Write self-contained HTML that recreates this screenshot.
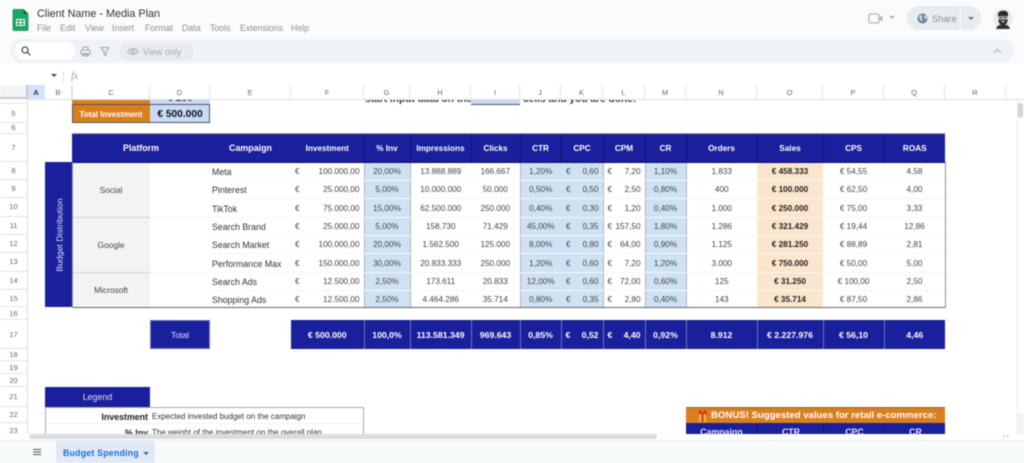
<!DOCTYPE html>
<html lang="en">
<head>
<meta charset="utf-8">
<title>Client Name - Media Plan</title>
<style>
html,body{margin:0;padding:0;width:1024px;height:463px;overflow:hidden;background:#fff}
body{position:relative;font-family:"Liberation Sans",sans-serif;color:#222}
#root{position:absolute;left:0;top:0;width:1024px;height:463px;overflow:hidden;filter:blur(.4px)}
.a{position:absolute;white-space:nowrap}
.c{text-align:center}
.chrome{left:0;top:0;width:1024px;height:64px;background:#f9fbfd}
.menu{top:23px;font-size:8.8px;color:#8b8f94}
.ch{top:85px;height:14px;line-height:15px;font-size:7.5px;color:#666;text-align:center;border-right:1px solid #e1e3e6;box-sizing:border-box;background:#fff}
.rh{left:0;width:28px;font-size:7.5px;color:#666;text-align:center;border-bottom:1px solid #e1e3e6;border-right:1px solid #dcdee1;box-sizing:border-box;background:#fff}
table{border-collapse:collapse;table-layout:fixed;position:absolute;font-size:8.2px;line-height:10px;color:#444}
td{padding:2px 0 0;box-sizing:border-box;overflow:hidden;white-space:nowrap;text-align:center;vertical-align:middle;border-bottom:1px solid #f7f7f7}
#data .hd td{background:#1a1f9c;color:#fff;font-weight:bold;font-size:8.2px;padding-top:3px;border-left:1px solid #11146e;border-bottom:1px solid #11146e}
#data .hd td.ar{font-size:8.9px;padding-top:1px;border-left:0}
td.b{background:#cfe2f3}
td.s{background:#fce5cd;font-weight:bold;color:#222}
td.l{border-left:1px solid #b0b4ba}
td.cam{text-align:left;padding-left:2px;font-size:8.8px;color:#333}
td.p{background:#f3f3f3;font-size:8.4px;color:#444;border-bottom:1px solid #d5d5d5;padding-top:0}
td.m{text-align:right;padding-right:4px}
td.m span{float:left;padding-left:4px}
td.ma span{padding-left:5px}
#tot td{background:#1a1f9c;color:#fff;font-weight:bold;font-size:8.7px;height:29px;padding-top:1px;border:0;border-left:1px solid #6d70bd}
#tot td:first-child{border-left:0}
#tot td.m span{padding-left:4px}
</style>
</head>
<body>
<div id="root">

<!-- sheet content -->
<div class="a" style="left:0;top:0;width:1024px;height:434px;overflow:hidden;background:#fff">
  <!-- row 4 remnants + row 5 -->
  <div class="a" style="left:72px;top:95px;width:78px;height:9px;background:#d97f1e"></div>
  <div class="a c" style="left:150px;top:93px;width:60px;height:11px;background:#c9daf8;font-size:10.2px;font-weight:bold;line-height:11px">€ 250</div>
  <div class="a c" style="left:72px;top:105px;width:78px;height:18px;line-height:19px;background:#d97f1e;color:#fff;font-size:8px;font-weight:bold">Total Investment</div>
  <div class="a c" style="left:150px;top:105px;width:60px;height:18px;line-height:19px;background:#c9daf8;color:#111;font-size:10.2px;font-weight:bold">€ 500.000</div>
  <div class="a" style="left:72px;top:104px;width:138px;height:19px;border:1px solid #555;box-sizing:border-box"></div>
  <div class="a" style="left:365px;top:94px;font-size:10.2px;font-weight:bold;color:#333;line-height:12px">start input data on the</div>
  <div class="a" style="left:471px;top:92px;width:49px;height:12px;background:#c9daf8;border-bottom:1px solid #555"></div>
  <div class="a" style="left:523px;top:94px;font-size:10.2px;font-weight:bold;color:#333;line-height:12px">cells and you are done!</div>

  <!-- side bar -->
  <div class="a" style="left:45px;top:162px;width:27px;height:145px;background:#1a1f9c"></div>
  <div class="a c" style="left:-13px;top:228px;width:145px;height:14px;line-height:14px;font-size:8.7px;color:#dfe0f5;transform:rotate(-90deg)">Budget Distribution</div>

  <table id="data" style="left:72px;top:134px;width:873px">
    <colgroup><col style="width:78px"><col style="width:60px"><col style="width:81px"><col style="width:73px"><col style="width:46px"><col style="width:61px"><col style="width:49px"><col style="width:41px"><col style="width:42px"><col style="width:42px"><col style="width:41px"><col style="width:71px"><col style="width:66px"><col style="width:61px"><col style="width:61px"></colgroup>
    <tr class="hd" style="height:28px"><td class="ar" colspan="2">Platform</td><td class="ar">Campaign</td><td style="border-left:0">Investment</td><td>% Inv</td><td>Impressions</td><td>Clicks</td><td>CTR</td><td>CPC</td><td>CPM</td><td>CR</td><td>Orders</td><td>Sales</td><td>CPS</td><td>ROAS</td></tr>
    <tr style="height:18px"><td class="p" rowspan="3">Social</td><td rowspan="3"></td><td class="cam">Meta</td><td class="m"><span>€</span>100.000,00</td><td class="b l">20,00%</td><td class="l">13.888.889</td><td>166.667</td><td class="b l">1,20%</td><td class="b m ma"><span>€</span>0,60</td><td class="m l"><span>€</span>7,20</td><td class="b l">1,10%</td><td class="l">1.833</td><td class="s">€ 458.333</td><td>€ 54,55</td><td>4,58</td></tr>
    <tr style="height:18px"><td class="cam">Pinterest</td><td class="m"><span>€</span>25.000,00</td><td class="b l">5,00%</td><td class="l">10.000.000</td><td>50.000</td><td class="b l">0,50%</td><td class="b m ma"><span>€</span>0,50</td><td class="m l"><span>€</span>2,50</td><td class="b l">0,80%</td><td class="l">400</td><td class="s">€ 100.000</td><td>€ 62,50</td><td>4,00</td></tr>
    <tr style="height:19px"><td class="cam">TikTok</td><td class="m"><span>€</span>75.000,00</td><td class="b l">15,00%</td><td class="l">62.500.000</td><td>250.000</td><td class="b l">0,40%</td><td class="b m ma"><span>€</span>0,30</td><td class="m l"><span>€</span>1,20</td><td class="b l">0,40%</td><td class="l">1.000</td><td class="s">€ 250.000</td><td>€ 75,00</td><td>3,33</td></tr>
    <tr style="height:18px"><td class="p" rowspan="3">Google</td><td rowspan="3"></td><td class="cam">Search Brand</td><td class="m"><span>€</span>25.000,00</td><td class="b l">5,00%</td><td class="l">158.730</td><td>71.429</td><td class="b l">45,00%</td><td class="b m ma"><span>€</span>0,35</td><td class="m l"><span>€</span>157,50</td><td class="b l">1,80%</td><td class="l">1.286</td><td class="s">€ 321.429</td><td>€ 19,44</td><td>12,86</td></tr>
    <tr style="height:18px"><td class="cam">Search Market</td><td class="m"><span>€</span>100.000,00</td><td class="b l">20,00%</td><td class="l">1.562.500</td><td>125.000</td><td class="b l">8,00%</td><td class="b m ma"><span>€</span>0,80</td><td class="m l"><span>€</span>64,00</td><td class="b l">0,90%</td><td class="l">1.125</td><td class="s">€ 281.250</td><td>€ 88,89</td><td>2,81</td></tr>
    <tr style="height:19px"><td class="cam">Performance Max</td><td class="m"><span>€</span>150.000,00</td><td class="b l">30,00%</td><td class="l">20.833.333</td><td>250.000</td><td class="b l">1,20%</td><td class="b m ma"><span>€</span>0,60</td><td class="m l"><span>€</span>7,20</td><td class="b l">1,20%</td><td class="l">3.000</td><td class="s">€ 750.000</td><td>€ 50,00</td><td>5,00</td></tr>
    <tr style="height:18px"><td class="p" rowspan="2" style="border-bottom:0;font-size:8.3px">Microsoft</td><td rowspan="2"></td><td class="cam">Search Ads</td><td class="m"><span>€</span>12.500,00</td><td class="b l">2,50%</td><td class="l">173.611</td><td>20.833</td><td class="b l">12,00%</td><td class="b m ma"><span>€</span>0,60</td><td class="m l"><span>€</span>72,00</td><td class="b l">0,60%</td><td class="l">125</td><td class="s">€ 31.250</td><td>€ 100,00</td><td>2,50</td></tr>
    <tr style="height:17px"><td class="cam">Shopping Ads</td><td class="m"><span>€</span>12.500,00</td><td class="b l">2,50%</td><td class="l">4.464.286</td><td>35.714</td><td class="b l">0,80%</td><td class="b m ma"><span>€</span>0,35</td><td class="m l"><span>€</span>2,80</td><td class="b l">0,40%</td><td class="l">143</td><td class="s">€ 35.714</td><td>€ 87,50</td><td>2,86</td></tr>
  </table>
  <!-- table outline -->
  <div class="a" style="left:72px;top:133px;width:873px;height:1px;background:#aaa"></div>
  <div class="a" style="left:72px;top:307px;width:873px;height:1px;background:#666"></div>
  <div class="a" style="left:945px;top:162px;width:1px;height:146px;background:#8f8f8f"></div>
  <div class="a" style="left:72px;top:162px;width:1px;height:146px;background:#9a9a9a"></div>

  <!-- totals -->
  <div class="a c" style="left:150px;top:320px;width:60px;height:29px;line-height:29px;background:#1a1f9c;color:#e3e4f7;font-size:8.6px;border:1px solid #6d70bd;box-sizing:border-box">Total</div>
  <table id="tot" style="left:291px;top:320px;width:654px">
    <colgroup><col style="width:73px"><col style="width:46px"><col style="width:61px"><col style="width:49px"><col style="width:41px"><col style="width:42px"><col style="width:42px"><col style="width:41px"><col style="width:71px"><col style="width:66px"><col style="width:61px"><col style="width:61px"></colgroup>
    <tr><td>€ 500.000</td><td>100,0%</td><td>113.581.349</td><td>969.643</td><td>0,85%</td><td class="m"><span>€</span>0,52</td><td class="m"><span>€</span>4,40</td><td>0,92%</td><td>8.912</td><td>€ 2.227.976</td><td>€ 56,10</td><td>4,46</td></tr>
  </table>

  <!-- legend -->
  <div class="a c" style="left:45px;top:387px;width:105px;height:20px;line-height:21px;background:#1a1f9c;color:#dcdef5;font-size:8.9px">Legend</div>
  <div class="a" style="left:45px;top:407px;width:319px;height:42px;border:1px solid #aaa;box-sizing:border-box"></div>
  <div class="a" style="left:46px;top:423px;width:317px;height:1px;background:#efefef"></div>
  <div class="a" style="left:46px;top:410px;width:102px;text-align:right;font-size:8.8px;font-weight:bold;color:#222;line-height:14px">Investment</div>
  <div class="a" style="left:152px;top:410px;font-size:8px;color:#333;line-height:14px">Expected invested budget on the campaign</div>
  <div class="a" style="left:46px;top:426px;width:102px;text-align:right;font-size:8.8px;font-weight:bold;color:#222;line-height:14px">% Inv</div>
  <div class="a" style="left:152px;top:426px;font-size:8px;color:#333;line-height:14px">The weight of the investment on the overall plan</div>

  <!-- bonus -->
  <div class="a" style="left:686px;top:407px;width:259px;height:16px;line-height:18px;background:#d97f1e;color:#fff;font-size:9.6px;font-weight:bold;box-shadow:inset 0 1px 0 #8a6a3a;text-indent:25px">BONUS! Suggested values for retail e-commerce:</div>
  <svg class="a" style="left:697px;top:410px" width="11" height="12" viewBox="0 0 11 12"><rect x="1" y="2" width="9" height="2" fill="#d8342a"/><rect x="2" y="4" width="7" height="8" fill="#e8b339"/><rect x="4.500" y="2" width="2" height="10" fill="#d8342a"/><rect x="2" y="0" width="2" height="2" fill="#d8342a"/><rect x="7" y="0" width="2" height="2" fill="#d8342a"/></svg>
  <div class="a" style="left:686px;top:423px;width:259px;height:12px;background:#1a1f9c"></div>
  <div class="a c" style="left:686px;top:425px;width:71px;font-size:8.8px;font-weight:bold;color:#e3e4f7;line-height:14px">Campaign</div>
  <div class="a c" style="left:757px;top:425px;width:66px;font-size:8.8px;font-weight:bold;color:#e3e4f7;line-height:14px;border-left:1px solid #11146e">CTR</div>
  <div class="a c" style="left:823px;top:425px;width:61px;font-size:8.8px;font-weight:bold;color:#e3e4f7;line-height:14px;border-left:1px solid #11146e">CPC</div>
  <div class="a c" style="left:884px;top:425px;width:61px;font-size:8.8px;font-weight:bold;color:#e3e4f7;line-height:14px;border-left:1px solid #11146e">CR</div>

  <!-- right scroll gutter -->
  <div class="a" style="left:1017px;top:99px;width:1px;height:341px;background:#e8eaed"></div>
  <div class="a" style="left:1018px;top:103px;width:5px;height:15px;border-radius:3px;background:#d2d4d8"></div>
  <div class="a" style="left:1018px;top:414px;width:6px;height:20px;background:#f3f3f3"></div>
</div>

<!-- column headers -->
<div class="a" style="left:0;top:85px;width:1024px;height:14px;background:#fff;border-bottom:1px solid #dfe1e4;box-sizing:content-box"></div>
<div class="a" style="left:0;top:85px;width:28px;height:14px;background:#f4f5f6;border-right:2px solid #c4c6c9;border-bottom:2px solid #c4c6c9;box-sizing:border-box"></div>
<div class="a ch" style="left:28px;width:17px;background:#d3e3fd;color:#333;font-weight:bold">A</div>
<div class="a ch" style="left:45px;width:27px">B</div>
<div class="a ch" style="left:72px;width:78px;border-left:1px solid #e1e3e6">C</div>
<div class="a ch" style="left:150px;width:60px">D</div>
<div class="a ch" style="left:210px;width:81px">E</div>
<div class="a ch" style="left:291px;width:73px">F</div>
<div class="a ch" style="left:364px;width:46px">G</div>
<div class="a ch" style="left:410px;width:61px">H</div>
<div class="a ch" style="left:471px;width:49px">I</div>
<div class="a ch" style="left:520px;width:41px">J</div>
<div class="a ch" style="left:561px;width:42px">K</div>
<div class="a ch" style="left:603px;width:42px">L</div>
<div class="a ch" style="left:645px;width:41px">M</div>
<div class="a ch" style="left:686px;width:71px">N</div>
<div class="a ch" style="left:757px;width:66px">O</div>
<div class="a ch" style="left:823px;width:61px">P</div>
<div class="a ch" style="left:884px;width:61px">Q</div>
<div class="a ch" style="left:945px;width:61px">R</div>

<!-- row headers -->
<div class="a" style="left:0;top:99px;width:28px;height:335px;overflow:hidden">
  <div class="a rh" style="top:0;height:5px"></div>
  <div class="a rh" style="top:5px;height:19px;line-height:19px">5</div>
  <div class="a rh" style="top:24px;height:11px;line-height:9px">6</div>
  <div class="a rh" style="top:35px;height:28px;line-height:28px">7</div>
  <div class="a rh" style="top:63px;height:18px;line-height:18px">8</div>
  <div class="a rh" style="top:81px;height:18px;line-height:18px">9</div>
  <div class="a rh" style="top:99px;height:19px;line-height:18px">10</div>
  <div class="a rh" style="top:118px;height:18px;line-height:18px">11</div>
  <div class="a rh" style="top:136px;height:18px;line-height:18px">12</div>
  <div class="a rh" style="top:154px;height:19px;line-height:18px">13</div>
  <div class="a rh" style="top:173px;height:18px;line-height:18px">14</div>
  <div class="a rh" style="top:191px;height:17px;line-height:18px">15</div>
  <div class="a rh" style="top:208px;height:13px;line-height:13px">16</div>
  <div class="a rh" style="top:221px;height:29px;line-height:29px">17</div>
  <div class="a rh" style="top:250px;height:12px;line-height:12px">18</div>
  <div class="a rh" style="top:262px;height:13px;line-height:13px">19</div>
  <div class="a rh" style="top:275px;height:13px;line-height:13px">20</div>
  <div class="a rh" style="top:288px;height:20px;line-height:20px">21</div>
  <div class="a rh" style="top:308px;height:16px;line-height:16px">22</div>
  <div class="a rh" style="top:324px;height:16px;line-height:16px">23</div>
</div>

<!-- top chrome -->
<div class="a chrome"></div>
<svg class="a" style="left:12px;top:9px" width="17" height="22" viewBox="0 0 17 22"><path d="M2 0h9.500L16.500 5v15.500a1.500 1.500 0 0 1-1.500 1.500H2a1.500 1.500 0 0 1-1.500-1.500V1.500A1.500 1.500 0 0 1 2 0z" fill="#1fa463"/><path d="M11.500 0l5 5h-5z" fill="#0d6b3d"/><path d="M4 10h9v7H4z M5 11v2h3v-2z M9 11v2h3v-2z M5 14v2h3v-2z M9 14v2h3v-2z" fill="#fff" fill-rule="evenodd"/></svg>
<div class="a" style="left:37px;top:7px;font-size:10.8px;color:#333;line-height:15px">Client Name - Media Plan</div>
<div class="a menu" style="left:37px">File</div>
<div class="a menu" style="left:60px">Edit</div>
<div class="a menu" style="left:85px">View</div>
<div class="a menu" style="left:112px">Insert</div>
<div class="a menu" style="left:145px">Format</div>
<div class="a menu" style="left:182px">Data</div>
<div class="a menu" style="left:210px">Tools</div>
<div class="a menu" style="left:240px">Extensions</div>
<div class="a menu" style="left:291px">Help</div>

<!-- video, share, avatar -->
<svg class="a" style="left:868px;top:12px" width="16" height="13" viewBox="0 0 16 13" fill="none" stroke="#b4b7bb" stroke-width="1.300"><rect x="1" y="2" width="10" height="9" rx="1.500"/><path d="M11.500 5.500L14.500 3.500v6l-3-2" fill="#b4b7bb" stroke="none"/></svg>
<div class="a" style="left:889px;top:16px;width:0;height:0;border:3px solid transparent;border-top:3px solid #b4b7bb"></div>
<div class="a" style="left:907px;top:6px;width:74px;height:24px;border-radius:12px;background:#e9ecef"></div>
<div class="a" style="left:960px;top:6px;width:1px;height:24px;background:#f6f7f8"></div>
<svg class="a" style="left:917px;top:13px" width="11" height="11" viewBox="0 0 11 11"><circle cx="5.500" cy="5.500" r="5" fill="#6f8198"/><path d="M2 3l2.500-1 1 1.500-1.500 1.500 1.500 1.500-.5 2L3 6.500z M7 3l2-.5 1 3-2 .5z" fill="#dfe4ea"/></svg>
<div class="a" style="left:932px;top:12px;font-size:9.3px;color:#8b8f94;line-height:14px">Share</div>
<div class="a" style="left:968px;top:17px;width:0;height:0;border:3px solid transparent;border-top:3px solid #777"></div>
<svg class="a" style="left:993px;top:8px" width="20" height="21" viewBox="0 0 20 21"><circle cx="10" cy="10.500" r="10" fill="#ececec"/><path d="M5 6c0-4 10-5 10 0v3H5z" fill="#2b2b2b"/><path d="M5.500 8h9v5c0 2-2 4-4.500 4s-4.500-2-4.500-4z" fill="#b9a99c"/><path d="M5.500 11c2 1 7 1 9 0v2c0 2-2 4-4.500 4s-4.500-2-4.500-4z" fill="#333"/><path d="M3 21c1-4 4-4.500 7-4.500s6 .5 7 4.500z" fill="#333"/><rect x="7" y="9" width="2" height="1" fill="#222"/><rect x="11" y="9" width="2" height="1" fill="#222"/><rect x="8.500" y="13" width="3" height="1" fill="#eee"/></svg>

<!-- toolbar -->
<div class="a" style="left:10px;top:39px;width:1004px;height:24px;border-radius:12px;background:#eff2f7"></div>
<div class="a" style="left:15px;top:42px;width:60px;height:18px;border-radius:9px;background:#fff"></div>
<svg class="a" style="left:21px;top:46px" width="10" height="10" viewBox="0 0 10 10" fill="none" stroke="#444" stroke-width="1.200"><circle cx="4" cy="4" r="3"/><path d="M6.300 6.300L9.300 9.300"/></svg>
<svg class="a" style="left:80px;top:46px" width="11" height="11" viewBox="0 0 11 11" fill="none" stroke="#a6a9ad" stroke-width="1.100"><rect x="1" y="4" width="9" height="4.500" rx="1"/><path d="M3 4V1h5v3M3 7.500h5V10H3z"/></svg>
<svg class="a" style="left:100px;top:46px" width="10" height="11" viewBox="0 0 10 11" fill="none" stroke="#a6a9ad" stroke-width="1.100"><path d="M1 1.500h8L6 5.500V9.500L4 8.500V5.500z"/></svg>
<div class="a" style="left:119px;top:43px;width:75px;height:17px;border-radius:9px;background:#e8ebef"></div>
<svg class="a" style="left:127px;top:47px" width="12" height="9" viewBox="0 0 12 9" fill="none" stroke="#a6a9ad" stroke-width="1"><path d="M.7 4.500C3 .7 9 .7 11.300 4.500 9 8.300 3 8.300 .7 4.500z"/><circle cx="6" cy="4.500" r="1.600"/></svg>
<div class="a" style="left:143px;top:45px;font-size:9px;color:#a6a9ad;line-height:14px">View only</div>
<svg class="a" style="left:993px;top:48px" width="9" height="6" viewBox="0 0 9 6" fill="none" stroke="#b4b7bb" stroke-width="1.200"><path d="M1 5l3.500-3.500L8 5"/></svg>

<!-- formula bar -->
<div class="a" style="left:0;top:64px;width:1024px;height:21px;background:#fff"></div>
<div class="a" style="left:51px;top:74px;width:0;height:0;border:3px solid transparent;border-top:3px solid #444"></div>
<div class="a" style="left:63px;top:71px;width:1px;height:11px;background:#dadce0"></div>
<div class="a" style="left:71px;top:70px;font-family:'Liberation Serif',serif;font-style:italic;font-size:10px;color:#999;line-height:14px">fx</div>

<!-- bottom -->
<div class="a" style="left:0;top:434px;width:1024px;height:6px;background:#fff"></div>
<div class="a" style="left:29px;top:434px;width:628px;height:5px;border-radius:3px;background:#dadce0"></div>
<div class="a" style="left:1003px;top:434px;font-size:6px;color:#888;line-height:6px">‹ ›</div>
<div class="a" style="left:0;top:440px;width:1024px;height:23px;background:#f8fbfc;border-top:1px solid #e9ecef;box-sizing:border-box"></div>
<div class="a" style="left:33px;top:449px;width:8px;height:1px;background:#555;box-shadow:0 2.500px 0 #555,0 5px 0 #555"></div>
<div class="a" style="left:56px;top:441px;width:99px;height:22px;background:#e1e9f7"></div>
<div class="a" style="left:63px;top:446px;font-size:8.8px;font-weight:bold;color:#1a6fd4;line-height:14px;letter-spacing:.2px">Budget Spending</div>
<div class="a" style="left:143px;top:452px;width:0;height:0;border:3px solid transparent;border-top:3px solid #1a6fd4"></div>

</div>
</body>
</html>
